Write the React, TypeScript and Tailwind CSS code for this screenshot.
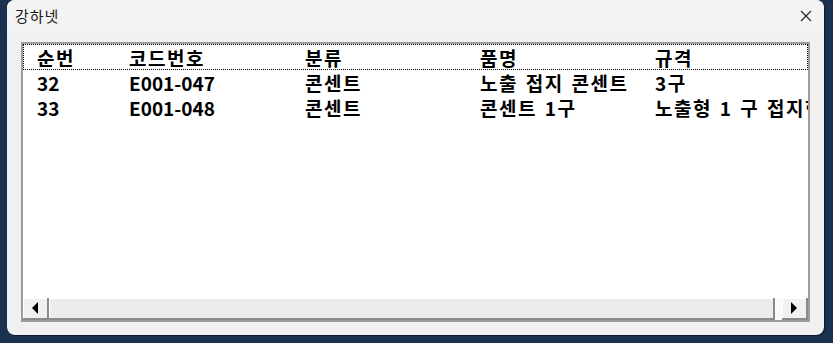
const font = { fontFamily: '"Malgun Gothic", "Noto Sans CJK KR", "Noto Sans", sans-serif' };

const rows = [
  ["32", "E001-047", "콘센트", "노출 접지 콘센트", "3구"],
  ["33", "E001-048", "콘센트", "콘센트 1구", "노출형 1 구 접지형"],
];

const cols = ["w-[92px]", "w-[176px]", "w-[175px]", "w-[175px]", "w-[200px]"];

// 한글이 들어간 셀은 자간을 조금 더 넓힘 (맑은 고딕 폭 맞춤)
const hasHangul = (s: string) => /[\uac00-\ud7a3]/.test(s);

function Row({ cells, focused }: { cells: string[]; focused?: boolean }) {
  return (
    <div
      className={`flex items-center whitespace-nowrap pl-[14px] text-[19px] font-bold leading-none text-black ${
        focused ? "h-[26px] outline outline-1 -outline-offset-1 outline-dotted outline-black" : "h-[25px]"
      }`}
    >
      {cells.map((c, i) => (
        <div
          key={i}
          className={`${cols[i]} shrink-0 ${hasHangul(c) ? "tracking-[1.5px] [word-spacing:2px]" : "tracking-normal"}`}
        >
          {c}
        </div>
      ))}
    </div>
  );
}

function ScrollBtn({ dir }: { dir: "left" | "right" }) {
  return (
    <div className="flex h-full w-[26px] shrink-0 items-center justify-center border-b-2 border-r-2 border-[#8a8a8a] bg-[#f0f0f0] shadow-[inset_1px_1px_0_#ffffff]">
      {dir === "left" ? (
        <div className="h-0 w-0 border-y-[6px] border-r-[6px] border-y-transparent border-r-black" />
      ) : (
        <div className="h-0 w-0 border-y-[6px] border-l-[6px] border-y-transparent border-l-black" />
      )}
    </div>
  );
}

export default function App() {
  return (
    <div className="flex h-[343px] w-[833px] bg-[#1b3152] pl-[7px] pr-[9px] pb-[8px]" style={font}>
      <div className="flex h-[335px] w-[817px] flex-col rounded-[8px] bg-[#f0f0f0] shadow-[1px_1px_0_#0d1a2e]">
        {/* 제목 표시줄 */}
        <div className="flex h-[32px] shrink-0 items-center justify-between rounded-t-[8px] bg-[#f3f3f3] pl-[8px] pr-[10px]">
          <span className="text-[15px] tracking-[1px] text-[#1a1a1a]">강하넷</span>
          <svg width="12" height="12" viewBox="0 0 12 12" className="mr-[2px]">
            <path d="M1 1 L11 11 M11 1 L1 11" stroke="#222" strokeWidth="1.1" />
          </svg>
        </div>

        {/* 목록 */}
        <div className="ml-[14px] mt-[10px] flex h-[280px] w-[789px] flex-col border-2 border-[#9c9c9c] bg-white">
          <div className="flex-1 overflow-hidden">
            <Row cells={["순번", "코드번호", "분류", "품명", "규격"]} focused />
            {rows.map((r) => (
              <Row key={r[0]} cells={r} />
            ))}
          </div>
          <div className="flex h-[22px] shrink-0 bg-[#f4f4f4]">
            <ScrollBtn dir="left" />
            <div className="flex-1 border-b-2 border-r-2 border-[#8a8a8a] bg-[#ececec] shadow-[inset_1px_1px_0_#ffffff]" />
            <div className="w-[7px] shrink-0 bg-[#fafafa]" />
            <ScrollBtn dir="right" />
          </div>
        </div>
      </div>
    </div>
  );
}
